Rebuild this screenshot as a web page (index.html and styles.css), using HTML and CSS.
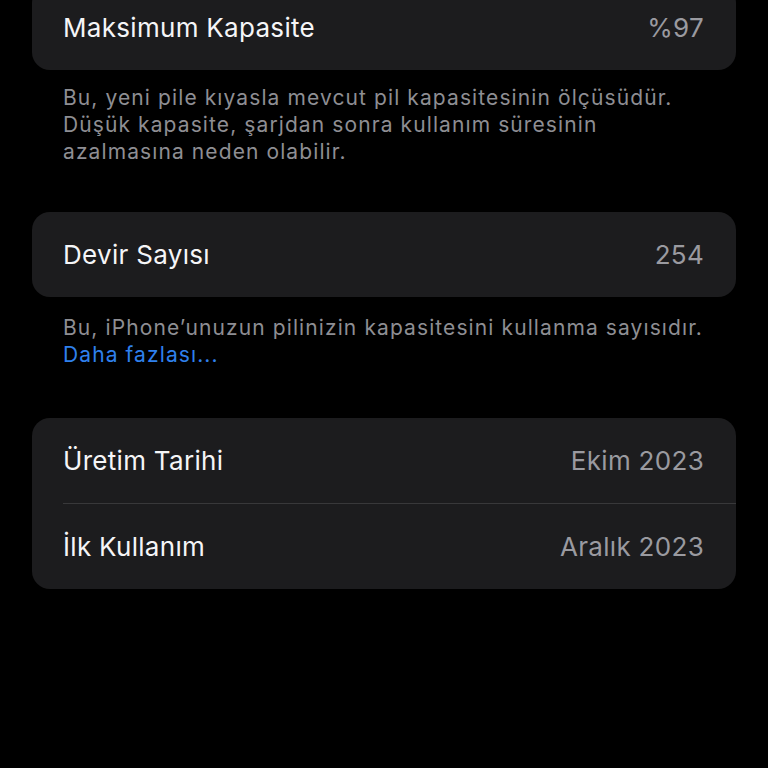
FILE: index.html
```html
<!DOCTYPE html>
<html lang="tr">
<head>
<meta charset="utf-8">
<link rel="stylesheet" href="styles.css">
</head>
<body>
<div class="page">
  <section class="group first">
    <div class="card">
      <div class="row"><span class="label">Maksimum Kapasite</span><span class="value">%97</span></div>
    </div>
    <p class="footer">Bu, yeni pile kıyasla mevcut pil kapasitesinin ölçüsüdür.<br>Düşük kapasite, şarjdan sonra kullanım süresinin<br>azalmasına neden olabilir.</p>
  </section>
  <section class="group second">
    <div class="card">
      <div class="row"><span class="label">Devir Sayısı</span><span class="value">254</span></div>
    </div>
    <p class="footer footer-two">Bu, iPhone’unuzun pilinizin kapasitesini kullanma sayısıdır.<br><a class="link" href="#">Daha fazlası...</a></p>
  </section>
  <section class="group third">
    <div class="card">
      <div class="row"><span class="label">Üretim Tarihi</span><span class="value">Ekim 2023</span></div>
      <div class="sep"></div>
      <div class="row"><span class="label">İlk Kullanım</span><span class="value">Aralık 2023</span></div>
    </div>
  </section>
</div>
</body>
</html>
```
FILE: styles.css
```css
html, body {
  margin: 0;
  padding: 0;
  background: #000;
  height: 100%;
  overflow: hidden;
}
body {
  font-family: "Inter", "Noto Sans", "Liberation Sans", sans-serif;
  color: #fff;
}
.page {
  padding: 0 32px;
  margin-top: -15px;
}
.group {
  margin: 0;
}
.second {
  margin-top: 47px;
}
.third {
  margin-top: 50px;
}
.card {
  background: #1c1c1e;
  border-radius: 18px;
  overflow: hidden;
}
.row {
  height: 85px;
  display: flex;
  align-items: center;
  justify-content: space-between;
  padding: 0 32px 0 31px;
}
.label {
  font-size: 26px;
  color: #f5f5f7;
  letter-spacing: 0.3px;
}
.value {
  font-size: 26px;
  color: #9a9aa0;
  letter-spacing: 0.3px;
}
.sep {
  height: 1px;
  background: #38383a;
  margin-left: 31px;
}
.footer {
  margin: 0;
  padding: 14px 0 0 31px;
  font-size: 21px;
  line-height: 27px;
  color: #8e8e93;
  letter-spacing: 1.1px;
  white-space: nowrap;
}
.footer-two {
  padding-top: 17px;
}
.link {
  color: #2f80ed;
  text-decoration: none;
}
```
